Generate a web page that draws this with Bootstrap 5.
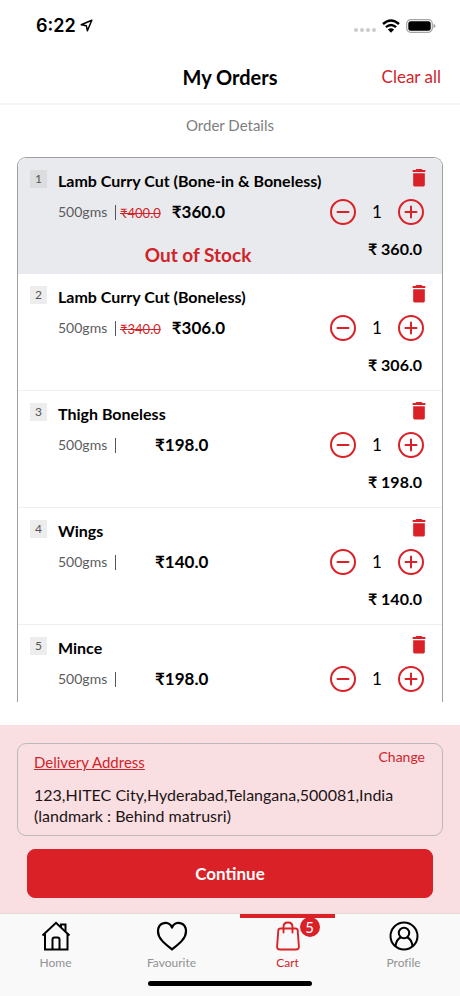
<!DOCTYPE html>
<html lang="en">
<head>
<meta charset="utf-8">
<meta name="viewport" content="width=device-width, initial-scale=1">
<title>My Orders</title>
<link rel="stylesheet" href="https://cdn.jsdelivr.net/npm/bootstrap@5.3.0/dist/css/bootstrap.min.css">
<style>
:root { --brand: #da2128; --brand-ink: #d0242b; }
body { font-family: Lato, "Noto Sans", sans-serif; font-variant-ligatures: none; color: #000; background: #fff; line-height: 24px; }
svg { display: block; }
.status-bar { height: 51px; padding: 0 24px 0 36px; }
.clock { font: 600 18px/24px Inter, sans-serif; }
.status-icons { gap: 6px; }
.signal-dots { gap: 2px; padding-bottom: 1px; }
.signal-dots i { width: 4px; height: 4px; border-radius: 50%; background: #ccc; }
.top-bar { display: grid; grid-template-columns: 1fr auto 1fr; height: 54px; border-bottom: 2px solid #f5f5f6; padding: 0 19px; }
.top-bar h1 { grid-column: 2; font-size: 20px; line-height: 24px; font-weight: 700; }
.clear-all { font-size: 17px; color: var(--brand-ink); }
.sub-title { font-size: 15px; line-height: 24px; color: #808080; font-weight: 400; padding: 8px 0 20px; }
.order-list { margin: 0 17px; border: 1px solid #a0a0a2; border-bottom: 0; border-radius: 9px 9px 0 0; overflow-y: auto; scrollbar-width: none; flex: 1 1 0; min-height: 0; }
.order-list::-webkit-scrollbar { display: none; }
.order-item { padding: 11px 18px 13px 12px; border-bottom: 1px solid #efeff0; }
.order-item.sold-out { background: #e9eaed; border-color: #e9eaed; padding-bottom: 6px; }
.item-no { width: 17px; height: 18px; line-height: 18px; font-size: 12px; background: #ededee; color: #555; margin: 1px 11px 0 0; }
.sold-out .item-no { background: #dcdddf; }
.item-name { font-size: 16px; line-height: 24px; font-weight: 700; }
.item-line { height: 26px; margin-top: 6px; }
.weight { font-size: 14px; color: #5c5c5e; width: 57px; }
.divider { width: 1px; height: 15px; background: #555; margin-right: 4px; }
.old-price { font-size: 13px; color: var(--brand-ink); min-width: 24px; margin-right: 11px; padding-top: 2px; }
.price { font-size: 17px; font-weight: 700; }
.stock-note { font-size: 19px; font-weight: 700; color: var(--brand-ink); margin-top: 18px; padding-left: 8px; }
.item-side { width: 94px; }
.icon-btn { padding: 0; border: 0; background: none; color: var(--brand); }
.trash-btn { margin-right: -3px; }
.qty-line { margin-top: 12px; font-size: 17px; }
.total { font-size: 16px; font-weight: 700; margin: 12px 2px 0 0; }
.checkout { background: #fadfe2; margin-top: 23px; padding: 18px 17px 15px; }
.address-box { border: 1px solid #bcb8bb; border-radius: 9px; padding: 2px 17px 9px 16px; }
.address-title { font-size: 15px; line-height: 24px; font-weight: 400; color: var(--brand-ink); padding-top: 4px; }
.change-link { font-size: 14px; line-height: 22px; color: var(--brand-ink); }
.address-box address { font-size: 16px; line-height: 21px; color: #201416; margin: 10px 0 0; }
.continue-btn { margin: 13px 10px 0; height: 49px; border-radius: 8px; font-size: 17px; font-weight: 700; --bs-btn-bg: var(--brand); --bs-btn-border-color: var(--brand); --bs-btn-color: #fff; --bs-btn-hover-bg: #bd1a20; --bs-btn-hover-color: #fff; }
.tab-bar { background: #f9f9f9; border-top: 1px solid #e6d9da; padding: 0 9px 0 8px; }
.tab-item { width: 95px; font-size: 12px; line-height: 16px; color: #929292; padding-top: 7px; }
.tab-item svg { color: #000; }
.tab-item.current { color: var(--brand-ink); box-shadow: inset 0 4px 0 var(--brand); }
.tab-item.current svg { color: var(--brand); }
.tab-item .label { margin-top: 4px; }
.cart-count { left: 24px; top: -4px; width: 20px; height: 20px; line-height: 20px; font-size: 15px; background: var(--brand); }
.home-line { width: 164px; height: 5px; border-radius: 3px; background: #000; margin: 10px auto 10px; }
</style>
</head>
<body>
<svg class="d-none" aria-hidden="true">
  <symbol id="trash" viewBox="0 0 14 17"><path fill="currentColor" d="M4.500 0h5l.8 1H13v1.800H1V1h2.700zM1.500 4h11v11.200q0 1.300-1.300 1.300H2.800q-1.300 0-1.300-1.300z"/></symbol>
  <symbol id="minus" viewBox="0 0 26 26"><g fill="none" stroke="currentColor" stroke-width="2"><circle cx="13" cy="13" r="12"/><path stroke-linecap="round" d="M7.500 13h11"/></g></symbol>
  <symbol id="plus" viewBox="0 0 26 26"><g fill="none" stroke="currentColor" stroke-width="2"><circle cx="13" cy="13" r="12"/><path stroke-linecap="round" d="M7.500 13h11M13 7.500v11"/></g></symbol>
</svg>
<div class="d-flex flex-column vh-100">
  <div class="status-bar d-flex align-items-center justify-content-between">
    <div class="d-flex align-items-center gap-1">
      <span class="clock">6:22</span>
      <svg width="13" height="13" viewBox="0 0 13 13" fill="none" stroke="#000" stroke-width="1.500" stroke-linejoin="round"><path d="M11.800 1.200 1.200 5.700l5.100 1 1.100 5.100z"/></svg>
    </div>
    <div class="status-icons d-flex align-items-center">
      <span class="signal-dots d-flex align-self-end"><i></i><i></i><i></i><i></i></span>
      <svg width="18" height="14" viewBox="0 0 18 14" fill="none" stroke="#000" stroke-width="2.400"><path d="M1 5q8-7.200 16 0M3.900 8.200q5.100-4.400 10.200 0"/><path fill="#000" stroke="none" d="M5.900 10.600q3.100-2.500 6.200 0L9 13.800z"/></svg>
      <svg width="30" height="14" viewBox="0 0 30 14"><rect x=".7" y=".7" width="25.600" height="12.600" rx="4" fill="none" stroke="#a4a4a4" stroke-width="1.200"/><rect x="2.300" y="2.300" width="22.400" height="9.400" rx="2.500"/><path d="M27.500 5q2 .5 2 2t-2 2z" fill="#999"/></svg>
    </div>
  </div>
  <header class="top-bar align-items-center">
    <h1 class="mb-0">My Orders</h1>
    <a href="#" class="clear-all text-decoration-none text-end">Clear all</a>
  </header>
  <h2 class="sub-title text-center mb-0">Order Details</h2>

  <main class="order-list">
    <article class="order-item sold-out d-flex">
      <span class="item-no text-center">1</span>
      <div class="flex-grow-1">
        <div class="item-name text-nowrap">Lamb Curry Cut (Bone-in &amp; Boneless)</div>
        <div class="item-line d-flex align-items-center"><span class="weight">500gms</span><span class="divider"></span><s class="old-price">₹400.0</s><span class="price">₹360.0</span></div>
        <div class="stock-note text-center">Out of Stock</div>
      </div>
      <div class="item-side d-flex flex-column align-items-end flex-shrink-0">
        <button class="icon-btn trash-btn" aria-label="Remove"><svg width="16" height="18"><use href="#trash"/></svg></button>
        <div class="qty-line d-flex align-items-center justify-content-between w-100"><button class="icon-btn" aria-label="Less"><svg width="26" height="26"><use href="#minus"/></svg></button><span>1</span><button class="icon-btn" aria-label="More"><svg width="26" height="26"><use href="#plus"/></svg></button></div>
        <div class="total">₹ 360.0</div>
      </div>
    </article>
    <article class="order-item d-flex">
      <span class="item-no text-center">2</span>
      <div class="flex-grow-1">
        <div class="item-name text-nowrap">Lamb Curry Cut (Boneless)</div>
        <div class="item-line d-flex align-items-center"><span class="weight">500gms</span><span class="divider"></span><s class="old-price">₹340.0</s><span class="price">₹306.0</span></div>
      </div>
      <div class="item-side d-flex flex-column align-items-end flex-shrink-0">
        <button class="icon-btn trash-btn" aria-label="Remove"><svg width="16" height="18"><use href="#trash"/></svg></button>
        <div class="qty-line d-flex align-items-center justify-content-between w-100"><button class="icon-btn" aria-label="Less"><svg width="26" height="26"><use href="#minus"/></svg></button><span>1</span><button class="icon-btn" aria-label="More"><svg width="26" height="26"><use href="#plus"/></svg></button></div>
        <div class="total">₹ 306.0</div>
      </div>
    </article>
    <article class="order-item d-flex">
      <span class="item-no text-center">3</span>
      <div class="flex-grow-1">
        <div class="item-name text-nowrap">Thigh Boneless</div>
        <div class="item-line d-flex align-items-center"><span class="weight">500gms</span><span class="divider"></span><span class="old-price"></span><span class="price">₹198.0</span></div>
      </div>
      <div class="item-side d-flex flex-column align-items-end flex-shrink-0">
        <button class="icon-btn trash-btn" aria-label="Remove"><svg width="16" height="18"><use href="#trash"/></svg></button>
        <div class="qty-line d-flex align-items-center justify-content-between w-100"><button class="icon-btn" aria-label="Less"><svg width="26" height="26"><use href="#minus"/></svg></button><span>1</span><button class="icon-btn" aria-label="More"><svg width="26" height="26"><use href="#plus"/></svg></button></div>
        <div class="total">₹ 198.0</div>
      </div>
    </article>
    <article class="order-item d-flex">
      <span class="item-no text-center">4</span>
      <div class="flex-grow-1">
        <div class="item-name text-nowrap">Wings</div>
        <div class="item-line d-flex align-items-center"><span class="weight">500gms</span><span class="divider"></span><span class="old-price"></span><span class="price">₹140.0</span></div>
      </div>
      <div class="item-side d-flex flex-column align-items-end flex-shrink-0">
        <button class="icon-btn trash-btn" aria-label="Remove"><svg width="16" height="18"><use href="#trash"/></svg></button>
        <div class="qty-line d-flex align-items-center justify-content-between w-100"><button class="icon-btn" aria-label="Less"><svg width="26" height="26"><use href="#minus"/></svg></button><span>1</span><button class="icon-btn" aria-label="More"><svg width="26" height="26"><use href="#plus"/></svg></button></div>
        <div class="total">₹ 140.0</div>
      </div>
    </article>
    <article class="order-item d-flex">
      <span class="item-no text-center">5</span>
      <div class="flex-grow-1">
        <div class="item-name text-nowrap">Mince</div>
        <div class="item-line d-flex align-items-center"><span class="weight">500gms</span><span class="divider"></span><span class="old-price"></span><span class="price">₹198.0</span></div>
      </div>
      <div class="item-side d-flex flex-column align-items-end flex-shrink-0">
        <button class="icon-btn trash-btn" aria-label="Remove"><svg width="16" height="18"><use href="#trash"/></svg></button>
        <div class="qty-line d-flex align-items-center justify-content-between w-100"><button class="icon-btn" aria-label="Less"><svg width="26" height="26"><use href="#minus"/></svg></button><span>1</span><button class="icon-btn" aria-label="More"><svg width="26" height="26"><use href="#plus"/></svg></button></div>
      </div>
    </article>
  </main>

  <section class="checkout d-flex flex-column">
    <div class="address-box">
      <div class="d-flex justify-content-between align-items-start">
        <h3 class="address-title text-decoration-underline mb-0">Delivery Address</h3>
        <a href="#" class="change-link text-decoration-none">Change</a>
      </div>
      <address>123,HITEC City,Hyderabad,Telangana,500081,India<br>(landmark : Behind matrusri)</address>
    </div>
    <button class="btn continue-btn">Continue</button>
  </section>

  <footer class="tab-bar">
    <nav class="d-flex justify-content-between">
      <a href="#" class="tab-item d-flex flex-column align-items-center text-decoration-none">
        <svg width="30" height="30" viewBox="0 0 30 30" fill="none" stroke="currentColor" stroke-width="2"><path d="M1.500 14.500 15 1.800l13.500 12.700"/><path d="M4 12.500V28.500h22.500V12.500M20 6V3.500h4.500V10M11.500 28.500V18.500q0-2 2-2h3q2 0 2 2v10"/></svg>
        <span class="label">Home</span>
      </a>
      <a href="#" class="tab-item d-flex flex-column align-items-center text-decoration-none">
        <svg width="32" height="30" viewBox="0 0 32 30" fill="none" stroke="currentColor" stroke-width="2.200" stroke-linejoin="round"><path d="M16 6.500C13.500-.2 2 0 2 10.500 2 18 10 23.500 16 28.500 22 23.500 30 18 30 10.500 30 0 18.500-.2 16 6.500z"/></svg>
        <span class="label">Favourite</span>
      </a>
      <a href="#" class="tab-item current d-flex flex-column align-items-center text-decoration-none" aria-current="page">
        <span class="position-relative">
          <svg width="24" height="30" viewBox="0 0 24 30" fill="none" stroke="currentColor" stroke-width="1.900" stroke-linecap="round" stroke-linejoin="round"><path d="M4.500 7.500h15q2 0 2.200 2l1.200 16q.1 3-3 3H4.100q-3.100 0-3-3l1.200-16q.2-2 2.200-2zM7.500 11.500V6q0-4.500 4.500-4.500T16.500 6v5.500"/></svg>
          <span class="cart-count position-absolute rounded-circle text-white text-center">5</span>
        </span>
        <span class="label">Cart</span>
      </a>
      <a href="#" class="tab-item d-flex flex-column align-items-center text-decoration-none">
        <svg width="30" height="30" viewBox="0 0 30 30" fill="none" stroke="currentColor" stroke-width="2"><circle cx="15" cy="15" r="13.500"/><circle cx="15" cy="12" r="5.200"/><path d="M6.500 25.500C7 20 9.500 17.200 12 16.200M23.500 25.500C23 20 20.500 17.200 18 16.200"/></svg>
        <span class="label">Profile</span>
      </a>
    </nav>
    <div class="home-line"></div>
  </footer>
</div>
<script src="https://cdn.jsdelivr.net/npm/bootstrap@5.3.0/dist/js/bootstrap.bundle.min.js"></script>
</body>
</html>
